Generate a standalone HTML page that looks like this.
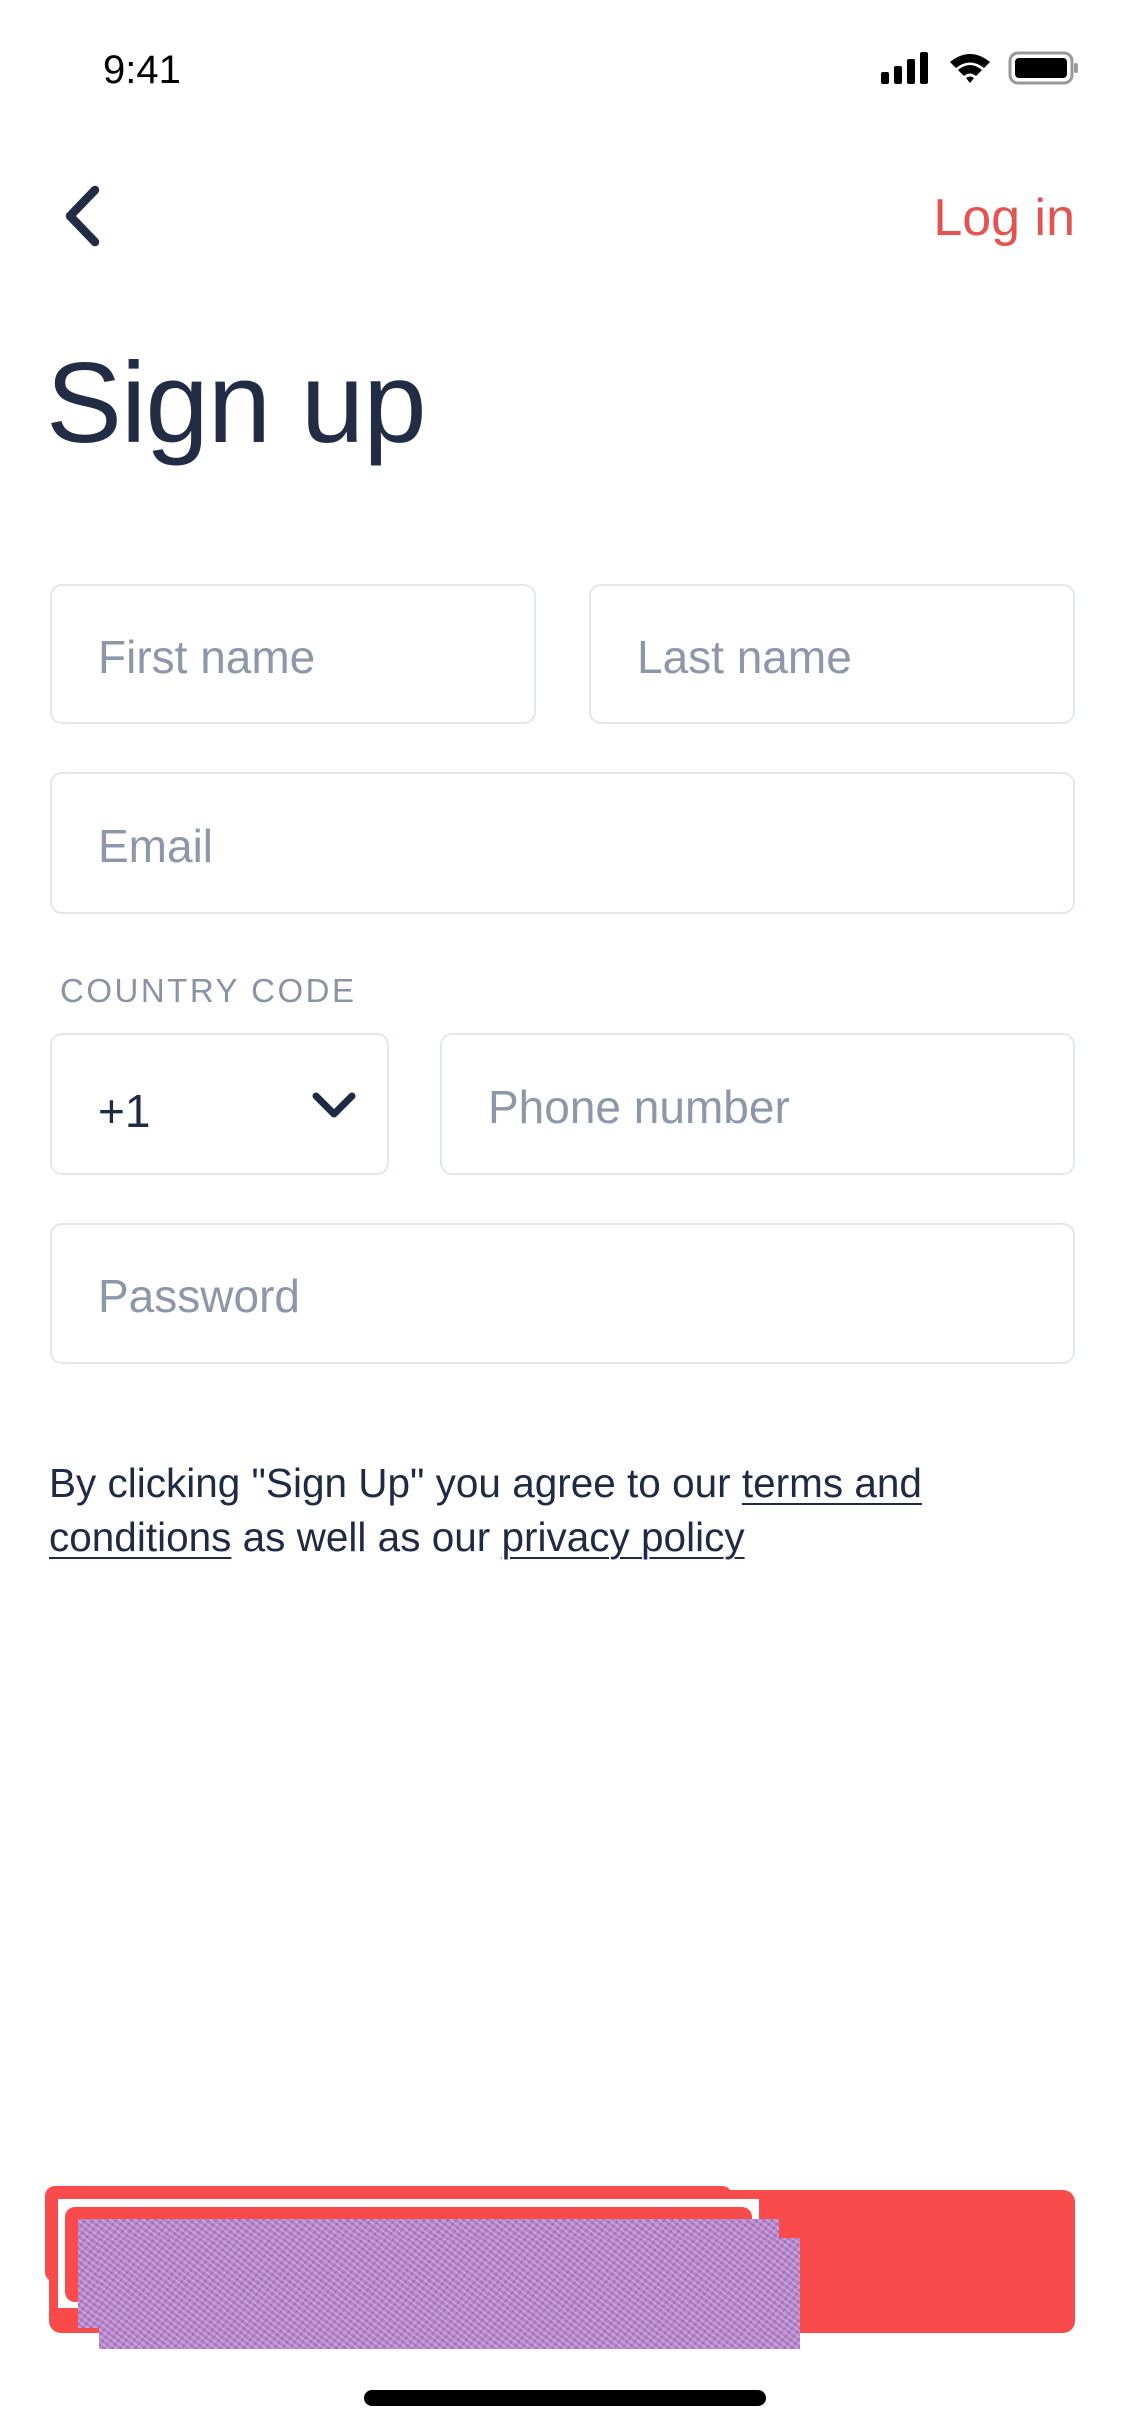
<!DOCTYPE html>
<html><head><meta charset="utf-8"><style>
html,body{margin:0;padding:0;background:#fff;}
body{width:1125px;height:2436px;position:relative;overflow:hidden;font-family:"Liberation Sans",sans-serif;}
.a{position:absolute;}
.f{position:absolute;border:2px solid #e3e6ec;border-radius:12px;box-sizing:border-box;}
.ph{position:absolute;left:46px;top:52%;transform:translateY(-50%);font-size:46px;color:#8d97aa;white-space:nowrap;}
.t{font-size:40.5px;color:#1f2a44;line-height:54px;}
.t u{text-decoration-thickness:2px;text-underline-offset:6px;}
.noise{background:#b584c9;background-image:repeating-linear-gradient(37deg,rgba(255,255,255,.25) 0 2px,transparent 2px 5px),repeating-linear-gradient(-51deg,rgba(120,60,160,.3) 0 2px,transparent 2px 6px);}
</style></head><body>
<div class="a" style="left:103px;top:48px;font-size:40px;color:#000;">9:41</div>
<svg class="a" style="left:878px;top:50px" width="200" height="36" viewBox="0 0 200 36">
<rect x="3" y="22" width="8" height="12" rx="2"/><rect x="16" y="16" width="8" height="18" rx="2"/><rect x="29" y="9" width="8" height="25" rx="2"/><rect x="42" y="2" width="8" height="32" rx="2"/>
<path d="M72 12 Q92 -4 112 12 L106 18 Q92 7 78 18Z M80 20 Q92 10 104 20 L98 26 Q92 21 86 26Z M88 28 Q92 25 96 28 L92 33Z"/>
<rect x="132" y="3" width="62" height="30" rx="8" fill="none" stroke="#999" stroke-width="3"/><rect x="137" y="8" width="52" height="20" rx="4"/><rect x="196" y="13" width="4" height="10" rx="2" fill="#999"/>
</svg>
<svg class="a" style="left:60px;top:182px" width="50" height="70" viewBox="0 0 50 70"><path d="M35 8 L10 34 L35 60" fill="none" stroke="#222c45" stroke-width="8.5" stroke-linecap="round" stroke-linejoin="round"/></svg>
<div class="a" style="right:50px;top:188px;font-size:52px;color:#e5524f;">Log in</div>
<div class="a" style="left:46px;top:338px;font-size:114px;color:#222c45;letter-spacing:-1px;">Sign up</div>
<div class="f" style="left:50px;top:584px;width:486px;height:140px"><span class="ph">First name</span></div>
<div class="f" style="left:589px;top:584px;width:486px;height:140px"><span class="ph">Last name</span></div>
<div class="f" style="left:50px;top:772px;width:1025px;height:142px"><span class="ph">Email</span></div>
<div class="a" style="left:60px;top:972px;font-size:33px;color:#8a93a5;letter-spacing:2.5px;">COUNTRY CODE</div>
<div class="f" style="left:50px;top:1033px;width:339px;height:142px"><span class="ph" style="color:#1f2a44;top:55%">+1</span>
<svg class="a" style="left:258px;top:55px" width="48" height="30" viewBox="0 0 48 30"><path d="M6 6 L24 24 L42 6" fill="none" stroke="#1f2a44" stroke-width="7" stroke-linecap="round" stroke-linejoin="round"/></svg></div>
<div class="f" style="left:440px;top:1033px;width:635px;height:142px"><span class="ph">Phone number</span></div>
<div class="f" style="left:50px;top:1223px;width:1025px;height:141px"><span class="ph">Password</span></div>
<div class="a t" style="left:49px;top:1456px;width:1050px;">By clicking "Sign Up" you agree to our <u>terms and</u><br><u>conditions</u> as well as our <u>privacy policy</u></div>
<div class="a" style="left:49px;top:2190px;width:1026px;height:143px;background:#f94b4b;border-radius:12px;"></div>
<div class="a" style="left:45px;top:2186px;width:687px;height:96px;background:#f94b4b;border-radius:10px;"></div>
<div class="a" style="left:58px;top:2199px;width:701px;height:109px;background:#fff;"></div>
<div class="a" style="left:65px;top:2207px;width:687px;height:95px;background:#f94b4b;border-radius:10px;"></div>
<div class="a noise" style="left:78px;top:2219px;width:701px;height:109px;"></div>
<div class="a noise" style="left:99px;top:2238px;width:701px;height:111px;"></div>
<div class="a" style="left:364px;top:2390px;width:402px;height:16px;background:#000;border-radius:8px;"></div>
</body></html>
